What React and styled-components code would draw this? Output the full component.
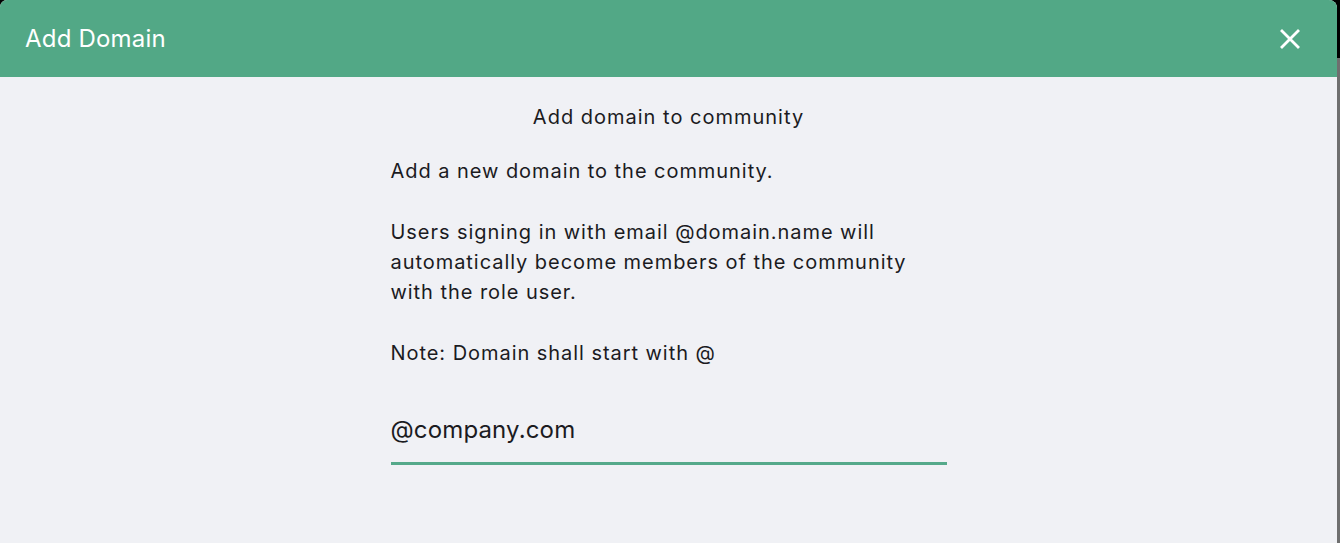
import React from 'react'
import styled, { createGlobalStyle } from 'styled-components'

const GlobalStyle = createGlobalStyle`
html, body {
  margin: 0;
  padding: 0;
  background: #000;
}
body {
  font-family: Inter, "Noto Sans", sans-serif;
  overflow: hidden;
}
`

const Screen = styled.div`
display: flex;
width: 1340px;
height: 543px;
background: #000;
`

const Dialog = styled.div`
width: 1337px;
height: 543px;
display: flex;
flex-direction: column;
background: #f0f1f5;
border-radius: 7px 8px 0 0;
overflow: hidden;
`

const Scrollbar = styled.div`
width: 3px;
display: flex;
flex-direction: column;
`

const ScrollTrack = styled.div`
flex: ${p => p.grow};
background: ${p => p.color};
`

const Header = styled.div`
height: 77px;
flex-shrink: 0;
display: flex;
align-items: center;
justify-content: space-between;
padding: 0 35px 0 25px;
background: #52a886;
`

const Title = styled.h1`
margin: 0;
font-size: 24px;
font-weight: 400;
color: #fff;
letter-spacing: 0.2px;
`

const CloseButton = styled.button`
border: 0;
background: none;
padding: 0;
width: 24px;
height: 24px;
display: flex;
align-items: center;
justify-content: center;
cursor: pointer;
`

const Body = styled.div`
display: flex;
flex-direction: column;
align-items: center;
padding-top: 25px;
`

const Subtitle = styled.h2`
margin: 0 0 24px;
font-size: 20px;
line-height: 30px;
font-weight: 400;
color: #1b1b1f;
letter-spacing: 1px;
`

const Column = styled.div`
width: 556px;
display: flex;
flex-direction: column;
`

const Text = styled.p`
margin: 0 0 ${p => (p.gap === undefined ? 31 : p.gap)}px;
font-size: 20px;
line-height: 30px;
color: #1b1b1f;
letter-spacing: 0.95px;
`

const Input = styled.input`
margin-top: 47px;
border: 0;
border-bottom: 3px solid #55a98a;
background: transparent;
padding: 0 0 17px;
font-family: Inter, "Noto Sans", sans-serif;
font-size: 24px;
line-height: 30px;
color: #1b1b1f;
letter-spacing: 0.15px;
outline: none;
`

const CloseIcon = () => (
  <svg width="20" height="20" viewBox="0 0 20 20">
    <path d="M2 2 L18 18 M18 2 L2 18" stroke="#fff" strokeWidth="2.8" strokeLinecap="square" />
  </svg>
)

const App = () => (
  <Screen>
    <GlobalStyle />
    <Dialog>
      <Header>
        <Title>Add Domain</Title>
        <CloseButton aria-label="Close">
          <CloseIcon />
        </CloseButton>
      </Header>
      <Body>
        <Subtitle>Add domain to community</Subtitle>
        <Column>
          <Text>Add a new domain to the community.</Text>
          <Text>
            Users signing in with email @domain.name will automatically become members of the community with the role user.
          </Text>
          <Text gap={0}>Note: Domain shall start with @</Text>
          <Input defaultValue="@company.com" />
        </Column>
      </Body>
    </Dialog>
    <Scrollbar>
      <ScrollTrack grow={58} color="#000" />
      <ScrollTrack grow={485} color="#6f6f6f" />
    </Scrollbar>
  </Screen>
)

export default App
